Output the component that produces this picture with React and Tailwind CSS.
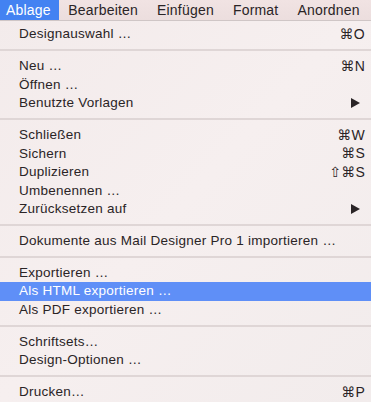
const menus = ['Ablage', 'Bearbeiten', 'Einfügen', 'Format', 'Anordnen'];

const groups = [
  [{ label: 'Designauswahl …', key: '⌘O' }],
  [
    { label: 'Neu …', key: '⌘N' },
    { label: 'Öffnen …' },
    { label: 'Benutzte Vorlagen', sub: true },
  ],
  [
    { label: 'Schließen', key: '⌘W' },
    { label: 'Sichern', key: '⌘S' },
    { label: 'Duplizieren', key: '⇧⌘S' },
    { label: 'Umbenennen …' },
    { label: 'Zurücksetzen auf', sub: true },
  ],
  [{ label: 'Dokumente aus Mail Designer Pro 1 importieren …' }],
  [
    { label: 'Exportieren …' },
    { label: 'Als HTML exportieren …', active: true },
    { label: 'Als PDF exportieren …' },
  ],
  [{ label: 'Schriftsets…' }, { label: 'Design-Optionen …' }],
  [{ label: 'Drucken…', key: '⌘P' }],
];

const Item = ({ item }) => (
  <div
    className={`flex h-[18.6px] items-center justify-between pl-[19px] pr-[6px] ${
      item.active ? 'bg-[#5f8ff7] text-white' : 'text-[#2a2426]'
    }`}
  >
    <span>{item.label}</span>
    {item.key && <span className="text-[14px]">{item.key}</span>}
    {item.sub && (
      <svg width="9" height="10" viewBox="0 0 9 10" className="mr-[5px]">
        <path d="M0 0 L9 5 L0 10 Z" fill="#2a2426" />
      </svg>
    )}
  </div>
);

export default function App() {
  return (
    <div className="h-[402px] w-[371px] overflow-hidden bg-gradient-to-br from-[#f3ebeb] via-[#f6efef] to-[#f2ecec] font-['Liberation_Sans','DejaVu_Sans',sans-serif] text-[13.5px] tracking-[0.25px]">
      <div className="flex h-[21px] border-b border-[#cfc6c6] bg-gradient-to-b from-[#f1e3e3] to-[#ecdede] text-[14px] tracking-[0.2px] text-[#2a2426]">
        {menus.map((m, i) => (
          <div
            key={m}
            className={`flex items-center ${
              i === 0 ? 'bg-[#4382f2] pl-[6px] pr-[8px] text-white' : 'px-[9.5px]'
            }`}
          >
            {m}
          </div>
        ))}
      </div>
      <div className="pt-[4px]">
        {groups.map((g, gi) => (
          <div key={gi}>
            {gi > 0 && (
              <div className="flex h-[13.2px] items-center">
                <div className="h-[2px] w-full bg-[#dfd6d6]" />
              </div>
            )}
            {g.map(item => (
              <Item key={item.label} item={item} />
            ))}
          </div>
        ))}
      </div>
    </div>
  );
}
